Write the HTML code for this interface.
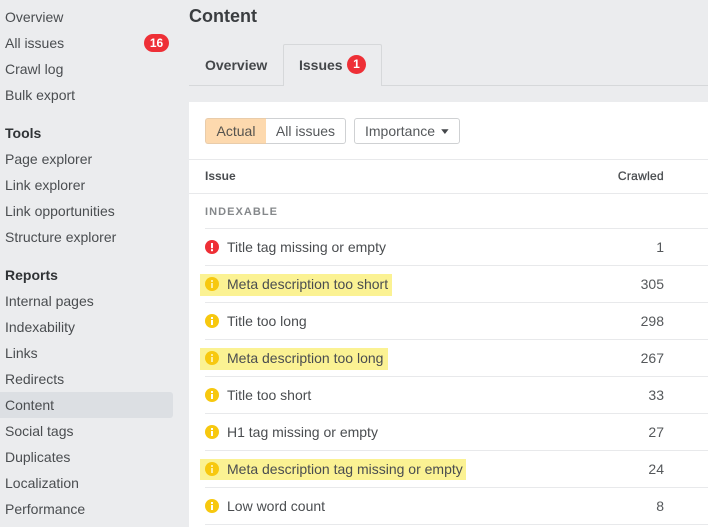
<!DOCTYPE html>
<html><head><meta charset="utf-8">
<style>
html,body{margin:0;padding:0;width:708px;height:527px;overflow:hidden;background:#ebecee;font-family:"Liberation Sans",sans-serif;color:#44474a}
.a{position:absolute;white-space:nowrap}
.s{left:5px;font-size:14px;line-height:20px;color:#4a4d50}
.h{left:5px;font-size:14px;line-height:20px;font-weight:bold;color:#303336}
.r{left:227px;font-size:14px;line-height:20px;color:#4a4d50}
.n{right:44px;font-size:14px;line-height:20px;color:#55585b}
.l{left:205px;width:503px;height:1px;background:#e8e9eb}
.y{left:200px;height:22px;background:#fbf293}
.ic{left:205px;width:14px;height:14px}
</style></head><body>
<div class="a" style="top:392px;height:26px;background:#dcdfe3;border-radius:0 3px 3px 0;left:0;width:173px"></div>
<div class="a s" style="top:7px">Overview</div>
<div class="a s" style="top:33px">All issues</div>
<div class="a" style="left:144px;top:34px;width:25px;height:18px;border-radius:9px;background:#ee2f36;color:#fff;font-size:12px;font-weight:bold;line-height:18px;text-align:center">16</div>
<div class="a s" style="top:59px">Crawl log</div>
<div class="a s" style="top:85px">Bulk export</div>
<div class="a h" style="top:123px">Tools</div>
<div class="a s" style="top:149px">Page explorer</div>
<div class="a s" style="top:175px">Link explorer</div>
<div class="a s" style="top:201px">Link opportunities</div>
<div class="a s" style="top:227px">Structure explorer</div>
<div class="a h" style="top:265px">Reports</div>
<div class="a s" style="top:291px">Internal pages</div>
<div class="a s" style="top:317px">Indexability</div>
<div class="a s" style="top:343px">Links</div>
<div class="a s" style="top:369px">Redirects</div>
<div class="a s" style="top:395px">Content</div>
<div class="a s" style="top:421px">Social tags</div>
<div class="a s" style="top:447px">Duplicates</div>
<div class="a s" style="top:473px">Localization</div>
<div class="a s" style="top:499px">Performance</div>

<div class="a" style="left:189px;top:5px;font-size:18px;line-height:22px;font-weight:bold;color:#3a3d40">Content</div>
<div class="a" style="left:189px;top:85px;width:519px;height:1px;background:#d6d8da"></div>
<div class="a" style="left:283px;top:44px;width:99px;height:42px;box-sizing:border-box;border:1px solid #d6d8da;border-bottom:none;border-radius:2px 2px 0 0;background:#ebecee"></div>
<div class="a" style="left:205px;top:55px;font-size:14px;line-height:20px;font-weight:bold;color:#44474a">Overview</div>
<div class="a" style="left:299px;top:55px;font-size:14px;line-height:20px;font-weight:bold;color:#44474a">Issues</div>
<div class="a" style="left:347px;top:55px;width:19px;height:19px;border-radius:50%;background:#ee2f36;color:#fff;font-size:12px;font-weight:bold;line-height:19px;text-align:center">1</div>

<div class="a" style="left:189px;top:102px;width:519px;height:425px;background:#fff"></div>

<div class="a" style="left:205px;top:118px;width:61px;height:26px;box-sizing:border-box;background:#fdd9ae;border:1px solid #e9ccaa;border-right:none;border-radius:3px 0 0 3px;font-size:14px;line-height:24px;text-align:center;color:#55534e">Actual</div>
<div class="a" style="left:266px;top:118px;width:80px;height:26px;box-sizing:border-box;background:#fff;border:1px solid #cfd1d3;border-left:none;border-radius:0 3px 3px 0;font-size:14px;line-height:24px;text-align:center;color:#55585b">All issues</div>
<div class="a" style="left:354px;top:118px;width:106px;height:26px;box-sizing:border-box;background:#fff;border:1px solid #cfd1d3;border-radius:3px;font-size:14px;line-height:24px;padding-left:10px;color:#55585b">Importance</div>
<svg class="a" style="left:441px;top:129px" width="8" height="6"><path d="M0.2 0.2H7.6L3.9 5z" fill="#44474a"/></svg>

<div class="a" style="left:189px;top:159px;width:519px;height:1px;background:#e8e9eb"></div>
<div class="a" style="left:205px;top:166px;font-size:12px;line-height:20px;font-weight:bold;color:#4a4d50">Issue</div>
<div class="a" style="right:44px;top:166px;font-size:12px;line-height:20px;letter-spacing:.3px;color:#4a4d50;-webkit-text-stroke:.3px #4a4d50">Crawled</div>
<div class="a" style="left:189px;top:193px;width:519px;height:1px;background:#e8e9eb"></div>
<div class="a" style="left:205px;top:202px;font-size:11px;line-height:20px;font-weight:bold;letter-spacing:1.05px;color:#85888b">INDEXABLE</div>

<div class="a l" style="top:228px"></div>
<div class="a l" style="top:265px"></div>
<div class="a l" style="top:302px"></div>
<div class="a l" style="top:339px"></div>
<div class="a l" style="top:376px"></div>
<div class="a l" style="top:413px"></div>
<div class="a l" style="top:450px"></div>
<div class="a l" style="top:487px"></div>
<div class="a l" style="top:524px"></div>

<div class="a y" style="top:274px;width:192px"></div>
<div class="a y" style="top:348px;width:188px"></div>
<div class="a y" style="top:459px;width:266px;height:21px"></div>

<svg class="a ic" style="top:240px" viewBox="0 0 14 14"><circle cx="7" cy="7" r="7" fill="#ee2f36"/><rect x="6" y="3" width="2" height="5.2" fill="#fff"/><rect x="6" y="9.2" width="2" height="2" fill="#fff"/></svg>
<svg class="a ic" style="top:277px" viewBox="0 0 14 14"><circle cx="7" cy="7" r="7" fill="#f7c80f"/><rect x="6" y="3" width="2" height="2" fill="#fdeea0"/><rect x="6" y="6" width="2" height="5" fill="#fdeea0"/></svg>
<svg class="a ic" style="top:314px" viewBox="0 0 14 14"><circle cx="7" cy="7" r="7" fill="#f7c80f"/><rect x="6" y="3" width="2" height="2" fill="#fff"/><rect x="6" y="6" width="2" height="5" fill="#fff"/></svg>
<svg class="a ic" style="top:351px" viewBox="0 0 14 14"><circle cx="7" cy="7" r="7" fill="#f7c80f"/><rect x="6" y="3" width="2" height="2" fill="#fdeea0"/><rect x="6" y="6" width="2" height="5" fill="#fdeea0"/></svg>
<svg class="a ic" style="top:388px" viewBox="0 0 14 14"><circle cx="7" cy="7" r="7" fill="#f7c80f"/><rect x="6" y="3" width="2" height="2" fill="#fff"/><rect x="6" y="6" width="2" height="5" fill="#fff"/></svg>
<svg class="a ic" style="top:425px" viewBox="0 0 14 14"><circle cx="7" cy="7" r="7" fill="#f7c80f"/><rect x="6" y="3" width="2" height="2" fill="#fff"/><rect x="6" y="6" width="2" height="5" fill="#fff"/></svg>
<svg class="a ic" style="top:462px" viewBox="0 0 14 14"><circle cx="7" cy="7" r="7" fill="#f7c80f"/><rect x="6" y="3" width="2" height="2" fill="#fdeea0"/><rect x="6" y="6" width="2" height="5" fill="#fdeea0"/></svg>
<svg class="a ic" style="top:499px" viewBox="0 0 14 14"><circle cx="7" cy="7" r="7" fill="#f7c80f"/><rect x="6" y="3" width="2" height="2" fill="#fff"/><rect x="6" y="6" width="2" height="5" fill="#fff"/></svg>

<div class="a r" style="top:237px">Title tag missing or empty</div><div class="a n" style="top:237px">1</div>
<div class="a r" style="top:274px">Meta description too short</div><div class="a n" style="top:274px">305</div>
<div class="a r" style="top:311px">Title too long</div><div class="a n" style="top:311px">298</div>
<div class="a r" style="top:348px">Meta description too long</div><div class="a n" style="top:348px">267</div>
<div class="a r" style="top:385px">Title too short</div><div class="a n" style="top:385px">33</div>
<div class="a r" style="top:422px">H1 tag missing or empty</div><div class="a n" style="top:422px">27</div>
<div class="a r" style="top:459px">Meta description tag missing or empty</div><div class="a n" style="top:459px">24</div>
<div class="a r" style="top:496px">Low word count</div><div class="a n" style="top:496px">8</div>
</body></html>
